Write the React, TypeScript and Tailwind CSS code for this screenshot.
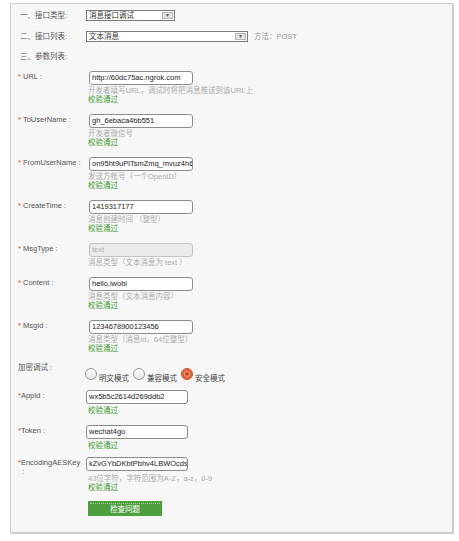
import React from "react";

const font = { fontFamily: '"Liberation Sans", "Noto Sans CJK SC", sans-serif' };

interface FieldProps {
  label: string;
  value: string;
  hint?: string;
  ok?: boolean;
  disabled?: boolean;
  className?: string;
}

function Field({ label, value, hint, ok = true, disabled, className }: FieldProps) {
  return (
    <div className={"flex " + (className || "")}>
      <div className="w-[77px] shrink-0 pl-[7px] pt-[1px] text-[#555]">
        <span className="text-[#e0412e]">*</span> {label} :
      </div>
      <div className="flex flex-col">
        <div
          className={
            "ml-[1px] h-[14px] w-[104px] overflow-hidden whitespace-nowrap rounded-[3px] border pl-[2px] text-[7.5px] leading-[12px] " +
            (disabled
              ? "border-[#c4c4c4] bg-[#ebebeb] text-[#b0b0b0]"
              : "border-[#8c8c8c] bg-white text-[#222]")
          }
        >
          {value}
        </div>
        {hint && <div className="mt-[1px] h-[9px] text-[#ababab]">{hint}</div>}
        {ok && <div className="h-[9px] text-[#3b9a2f]">校验通过</div>}
      </div>
    </div>
  );
}

function Select({ text, width }: { text: string; width: string }) {
  return (
    <div className={"flex h-[11px] border border-[#7a7a7a] bg-white " + width}>
      <div className="flex-1 pl-[2px] leading-[9px] text-[#333]">{text}</div>
      <div className="m-[1px] flex w-[11px] items-center justify-center border border-[#b5b5b5] bg-[#e2e2e2] text-[5px] leading-none text-[#555]">
        ▼
      </div>
    </div>
  );
}

function Radio({ checked, label }: { checked?: boolean; label: string }) {
  return (
    <div className="flex items-end">
      {checked ? (
        <div className="flex h-[12px] w-[12px] items-center justify-center rounded-full border border-[#c9542f] bg-[#e2683f]">
          <div className="h-[6px] w-[6px] rounded-full border border-[#f0a080] bg-[#c44a24]" />
        </div>
      ) : (
        <div className="h-[12px] w-[12px] rounded-full border border-[#9a9a9a] bg-gradient-to-b from-white to-[#e4e4e4]" />
      )}
      <span className="ml-[2px] translate-y-[3px] text-[#444]">{label}</span>
    </div>
  );
}

function KeyField({ label, value, hint, className }: { label: React.ReactNode; value: string; hint?: string; className?: string }) {
  return (
    <div className={"flex " + (className || "")}>
      <div className="w-[77px] shrink-0 pl-[7px] pt-[1px] text-[#555]">{label}</div>
      <div className="flex flex-col">
        <div className="ml-[-2px] h-[14px] w-[102px] overflow-hidden whitespace-nowrap rounded-[3px] border border-[#8c8c8c] bg-white pl-[2px] text-[7.5px] leading-[12px] text-[#222]">
          {value}
        </div>
        {hint && <div className="mt-[3px] h-[9px] text-[#ababab]">{hint}</div>}
        <div className={(hint ? "" : "mt-[2px] ") + "h-[9px] text-[#3b9a2f]"}>校验通过</div>
      </div>
    </div>
  );
}

export default function App() {
  return (
    <div className="min-h-[541px] bg-white pt-[3px] text-[7.5px] leading-[9px]" style={font}>
      <div className="ml-[10px] flex h-[530px] w-[443px] flex-col border border-[#cccccc] bg-[#f7f7f7] shadow-[1px_1px_0_#cfcfcf]">
        {/* 接口类型 */}
        <div className="mt-[6px] flex items-center">
          <div className="w-[75px] pl-[9px] text-[#555]">一、接口类型:</div>
          <Select text="消息接口调试" width="w-[89px]" />
        </div>

        <div className="mt-[10px] flex items-center">
          <div className="w-[75px] pl-[9px] text-[#555]">二、接口列表:</div>
          <Select text="文本消息" width="w-[162px]" />
          <span className="ml-[6px] text-[#9a9a9a]">方法：POST</span>
        </div>

        <div className="mt-[10px] h-[9px] pl-[9px] text-[#555]">三、参数列表:</div>

        {/* 参数 */}
        <Field className="mt-[10px]" label="URL" value="http://60dc75ac.ngrok.com" hint="开发者填写URL，调试时将把消息推送到该URL上" />
        <Field className="mt-[10px]" label="ToUserName" value="gh_6ebaca4bb551" hint="开发者微信号" />
        <Field className="mt-[10px]" label="FromUserName" value="on95ht9uPlTsmZmq_mvuz4h6f0" hint="发送方帐号（一个OpenID）" />
        <Field className="mt-[10px]" label="CreateTime" value="1419317177" hint="消息创建时间 （整型）" />
        <Field className="mt-[10px]" label="MsgType" value="text" hint="消息类型（文本消息为 text ）" disabled ok={false} />
        <Field className="mt-[10px]" label="Content" value="hello,iwobi" hint="消息类型（文本消息内容）" />
        <Field className="mt-[10px]" label="MsgId" value="1234678900123456" hint="消息类型（消息id，64位整型）" />

        {/* 加密调试 */}
        <div className="mt-[10px] flex h-[17px]">
          <div className="w-[74px] shrink-0 pl-[7px] text-[#555]">加密调试 :</div>
          <div className="mt-[3px] flex gap-[4px]">
            <Radio label="明文模式" />
            <Radio label="兼容模式" />
            <Radio checked label="安全模式" />
          </div>
        </div>

        <KeyField
          className="mt-[10px]"
          label={<><span className="text-[#e0412e]">*</span>AppId :</>}
          value="wx5b5c2614d269ddb2"
        />
        <KeyField
          className="mt-[10px]"
          label={<><span className="text-[#e0412e]">*</span>Token :</>}
          value="wechat4go"
        />
        <KeyField
          className="mt-[7px]"
          label={
            <>
              <span className="text-[#e0412e]">*</span>EncodingAESKey
              <br />
              <span className="pl-[4px]">:</span>
            </>
          }
          value="kZvGYbDKbtPbhv4LBWOcdsp!Jk2"
          hint="43位字符，字符范围为A-Z，a-z，0-9"
        />

        <div className="ml-[77px] mt-[9px] flex h-[15px] w-[74px] items-center justify-center bg-[#4f9f3f] p-[2px]">
          <div className="flex h-full w-full items-center justify-center border-t border-dotted border-white/50 text-white">
            检查问题
          </div>
        </div>
      </div>
    </div>
  );
}
